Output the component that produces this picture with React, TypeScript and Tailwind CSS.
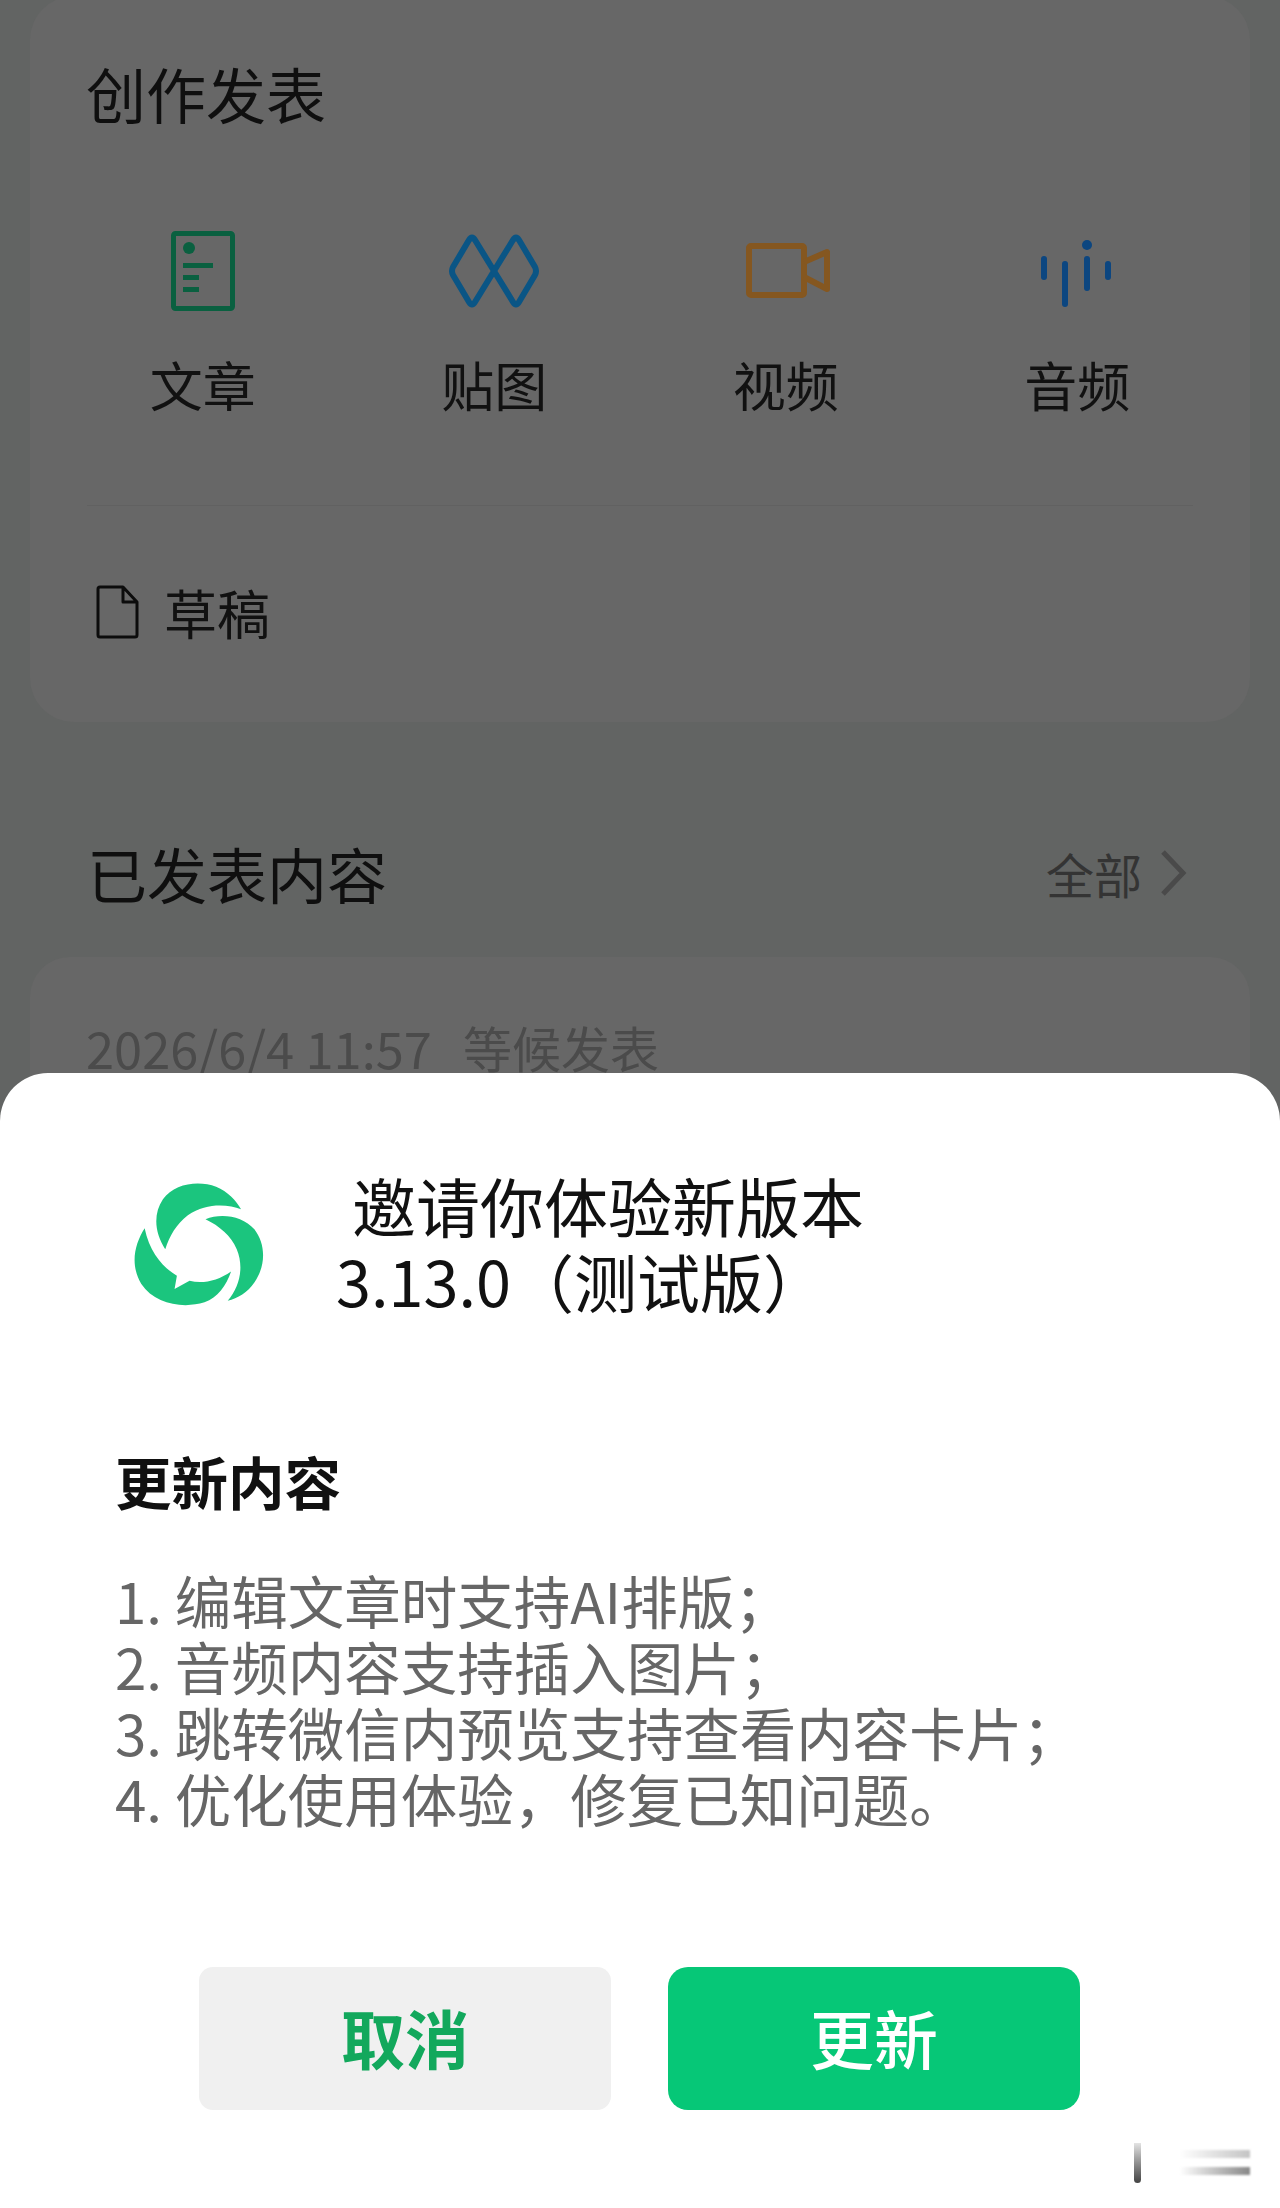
const cjk = "font-['Noto_Sans_CJK_SC','Noto_Sans',sans-serif]";

const DocIcon = () => (
	<svg viewBox="153 228 100 88" className="w-[100px] h-[88px]">
		<rect x="173.5" y="233.5" width="59" height="75" rx="2" fill="none" stroke="#0a6040" strokeWidth="5" />
		<circle cx="189" cy="248" r="6" fill="#0a6040" />
		<rect x="183" y="263" width="30" height="5" fill="#0a6040" />
		<rect x="183" y="275" width="16" height="5" fill="#0a6040" />
		<rect x="183" y="287" width="16" height="5" fill="#0a6040" />
	</svg>
);

const StickerIcon = () => (
	<svg viewBox="444 228 100 88" className="w-[100px] h-[88px]">
		<path
			d="M469 240 Q472 235 475 240 L494 271 L475 302 Q472 307 469 302 L453 275 Q451 271 453 267 Z"
			fill="none"
			stroke="#0a5585"
			strokeWidth="6"
			strokeLinejoin="round"
		/>
		<path
			d="M513 240 Q516 235 519 240 L535 267 Q537 271 535 275 L519 302 Q516 307 513 302 L494 271 Z"
			fill="none"
			stroke="#0a5585"
			strokeWidth="6"
			strokeLinejoin="round"
		/>
	</svg>
);

const VideoIcon = () => (
	<svg viewBox="736 228 100 88" className="w-[100px] h-[88px]">
		<rect x="749" y="246" width="55" height="49" rx="2" fill="none" stroke="#855720" strokeWidth="6" />
		<path d="M804 262 L827 252 V289 L804 277" fill="none" stroke="#855720" strokeWidth="6" strokeLinejoin="round" />
	</svg>
);

const AudioIcon = () => (
	<svg viewBox="1028 228 100 88" className="w-[100px] h-[88px]">
		<g stroke="#0c4680" strokeWidth="6" strokeLinecap="round" fill="none">
			<path d="M1045 259 V277" />
			<path d="M1066 264 V304" />
			<path d="M1088 259 V288" />
			<path d="M1109 264 V277" />
		</g>
		<circle cx="1088" cy="245" r="5" fill="#0c4680" />
	</svg>
);

const LogoIcon = () => (
	<svg viewBox="100 180 400 385" className="w-[133px] h-[128px]">
		<g fill="#1bc57e">
			<path d="M197 385 C165 335 160 280 190 235 C225 185 300 178 350 197 C385 212 410 238 425 265 C385 250 320 245 265 283 C230 310 210 345 197 385 Z" />
			<path d="M318 295 C365 275 430 285 465 325 C500 370 500 435 465 485 C445 515 415 532 385 540 C420 500 435 440 412 385 C395 345 360 315 318 295 Z" />
			<path d="M135 322 C105 370 90 430 125 490 C165 550 250 565 315 545 C355 530 380 495 395 452 C355 480 310 490 270 480 L225 505 L232 465 C190 440 150 395 135 322 Z" />
		</g>
	</svg>
);

const tools = [
	{ label: "文章", icon: <DocIcon /> },
	{ label: "贴图", icon: <StickerIcon /> },
	{ label: "视频", icon: <VideoIcon /> },
	{ label: "音频", icon: <AudioIcon /> },
];

const notes = [
	"1. 编辑文章时支持AI排版；",
	"2. 音频内容支持插入图片；",
	"3. 跳转微信内预览支持查看内容卡片；",
	"4. 优化使用体验，修复已知问题。",
];

export default function App() {
	return (
		<div className={`relative w-[1280px] h-[2208px] overflow-hidden bg-[#626463] ${cjk}`}>
			<div className="mx-[30px] -mt-[4px] h-[726px] rounded-[44px] bg-[#676767] px-[27px]">
				<div className="pt-[59px] pl-[29px] text-[60px] leading-[76px] text-[#0f0f0f]">创作发表</div>
				<div className="mt-[97px] grid grid-cols-4">
					{tools.map((tool) => (
						<div key={tool.label} className="flex flex-col items-center">
							{tool.icon}
							<div className="mt-[33px] text-[53px] leading-[70px] text-[#111111]">{tool.label}</div>
						</div>
					))}
				</div>
				<div className="mx-[30px] mt-[86px] h-px bg-[#616161]" />
				<div className="mt-[71px] ml-[38px] flex items-center">
					<svg viewBox="0 0 44 54" className="w-[44px] h-[54px]">
						<path
							d="M3 4 Q3 2 5 2 H28 L42 17 V50 Q42 52 40 52 H5 Q3 52 3 50 Z M28 2 V17 H42"
							fill="none"
							stroke="#0c0c0c"
							strokeWidth="3"
							strokeLinejoin="round"
						/>
					</svg>
					<div className="ml-[25px] text-[53px] leading-[70px] text-[#111111]">草稿</div>
				</div>
			</div>

			<div className="mt-[112px] flex items-center justify-between pl-[87px] pr-[93px]">
				<div className="text-[60px] leading-[78px] text-[#0f0f0f]">已发表内容</div>
				<div className="flex items-center">
					<div className="text-[48px] leading-[64px] text-[#343434]">全部</div>
					<svg viewBox="0 0 28 46" className="ml-[17px] w-[28px] h-[46px]">
						<path d="M4 2 L24 23 L4 44" fill="none" stroke="#4a4a4a" strokeWidth="5" />
					</svg>
				</div>
			</div>

			<div className="mx-[30px] mt-[45px] h-[400px] rounded-[40px] bg-[#676767] pl-[56px] pt-[57px]">
				<div className="flex leading-[66px] text-[#4b4b4b]">
					<span className="text-[50.6px]">2026/6/4 11:57</span>
					<span className="ml-[31px] text-[49px]">等候发表</span>
				</div>
			</div>

			{/* bottom sheet sits over the dimmed page */}
			<div className="absolute inset-x-0 top-[1073px] bottom-0 rounded-t-[48px] bg-white">
				<div className="flex pl-[133px] pt-[108px]">
					<LogoIcon />
					<div className="ml-[70px] -mt-[15px] text-[#111111]">
						<div className="pl-[16px] text-[64px] leading-[76px]">邀请你体验新版本</div>
						<div className="text-[63px] leading-[76px]">3.13.0（测试版）</div>
					</div>
				</div>
				<div className="mt-[124px] pl-[115px] text-[56.5px] font-bold leading-[76px] text-[#111111]">更新内容</div>
				<div className="mt-[48px] pl-[115px] text-[56.5px] leading-[66px] text-[#666666]">
					{notes.map((note) => (
						<div key={note}>{note}</div>
					))}
				</div>
				<div className="mt-[137px] flex gap-[57px] pl-[199px]">
					<div className="flex h-[143px] w-[412px] items-center justify-center rounded-[14px] bg-[#f0f0f0] pb-[6px] text-[64px] font-bold text-[#12a85c]">
						取消
					</div>
					<div className="flex h-[143px] w-[412px] items-center justify-center rounded-[20px] bg-[#06c777] pb-[6px] text-[64px] font-medium text-white">
						更新
					</div>
				</div>

				{/* blurred watermark in the corner */}
				<div className="absolute left-[1134px] top-[1070px] h-[40px] w-[7px] rounded-b-full bg-gradient-to-b from-[#e4e4e4] to-[#444444]" />
				<div className="absolute left-[1180px] top-[1077px] h-[8px] w-[70px] bg-gradient-to-r from-white to-[#c4c4c4] blur-[1px]" />
				<div className="absolute left-[1180px] top-[1094px] h-[8px] w-[70px] bg-gradient-to-r from-white to-[#888888] blur-[1px]" />
			</div>
		</div>
	);
}
